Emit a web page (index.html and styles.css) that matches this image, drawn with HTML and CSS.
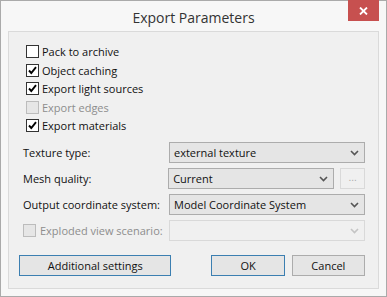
FILE: index.html
```html
<!DOCTYPE html>
<html lang="en">
<head>
    <meta charset="UTF-8">
    <title>Export Parameters</title>
    <link rel="stylesheet" href="styles.css">
</head>
<body>
    <div class="window">
        <div class="titlebar">
            <span class="title">Export Parameters</span>
            <button class="close"><svg width="9" height="8" viewBox="0 0 9 8"><path d="M1 0.5 L8 7.5 M8 0.5 L1 7.5" stroke="white" stroke-width="1.8"/></svg></button>
        </div>
        <div class="content">
            <div class="checks">
                <label class="check"><span class="box"></span>Pack to archive</label>
                <label class="check"><span class="box"><svg width="11" height="11" viewBox="0 0 11 11"><path d="M2 5.5 L4.3 8 L9 2.2" fill="none" stroke="#000" stroke-width="1.9"/></svg></span>Object caching</label>
                <label class="check"><span class="box"><svg width="11" height="11" viewBox="0 0 11 11"><path d="M2 5.5 L4.3 8 L9 2.2" fill="none" stroke="#000" stroke-width="1.9"/></svg></span>Export light sources</label>
                <label class="check disabled"><span class="box"></span>Export edges</label>
                <label class="check"><span class="box"><svg width="11" height="11" viewBox="0 0 11 11"><path d="M2 5.5 L4.3 8 L9 2.2" fill="none" stroke="#000" stroke-width="1.9"/></svg></span>Export materials</label>
            </div>
            <div class="form">
                <div class="row">
                    <span class="label">Texture type:</span>
                    <div class="select">external texture<svg class="arrow" width="9" height="6" viewBox="0 0 9 6"><path d="M1 1 L4.5 4.5 L8 1" fill="none" stroke="#555" stroke-width="1.6"/></svg></div>
                </div>
                <div class="row">
                    <span class="label">Mesh quality:</span>
                    <div class="select short">Current<svg class="arrow" width="9" height="6" viewBox="0 0 9 6"><path d="M1 1 L4.5 4.5 L8 1" fill="none" stroke="#555" stroke-width="1.6"/></svg></div>
                    <button class="dots">...</button>
                </div>
                <div class="row">
                    <span class="label">Output coordinate system:</span>
                    <div class="select">Model Coordinate System<svg class="arrow" width="9" height="6" viewBox="0 0 9 6"><path d="M1 1 L4.5 4.5 L8 1" fill="none" stroke="#555" stroke-width="1.6"/></svg></div>
                </div>
                <div class="row">
                    <label class="check disabled exploded"><span class="box"></span>Exploded view scenario:</label>
                    <div class="select disabled"><svg class="arrow" width="9" height="6" viewBox="0 0 9 6"><path d="M1 1 L4.5 4.5 L8 1" fill="none" stroke="#c4c4c4" stroke-width="1.6"/></svg></div>
                </div>
            </div>
            <div class="buttons">
                <button class="btn wide">Additional settings</button>
                <button class="btn ok">OK</button>
                <button class="btn cancel">Cancel</button>
            </div>
        </div>
    </div>
</body>
</html>
```

FILE: styles.css
```css
body {
    margin: 0;
    padding: 0;
    font-family: 'Open Sans', 'Noto Sans', sans-serif;
    font-size: 11px;
    color: #111;
}

.window {
    width: 387px;
    height: 297px;
    box-sizing: border-box;
    border: 1px solid #aaa;
    background-color: #f7f7f7;
    padding: 0 7px 7px 7px;
    display: flex;
    flex-direction: column;
}

.titlebar {
    height: 30px;
    display: flex;
    justify-content: center;
    align-items: center;
    position: relative;
}

.title {
    font-size: 14px;
    color: #333;
    margin-top: 2px;
}

.close {
    position: absolute;
    top: -1px;
    right: 0;
    width: 31px;
    height: 21px;
    border: none;
    background-color: #c7504f;
    padding: 0;
    display: flex;
    align-items: center;
    justify-content: center;
}

.content {
    flex: 1;
    background-color: #f0f0f0;
    border: 1px solid #dadada;
    padding: 13px 13px 0 14px;
    display: flex;
    flex-direction: column;
}

.checks {
    display: flex;
    flex-direction: column;
    gap: 5.5px;
    padding-left: 3px;
}

.check {
    display: flex;
    align-items: center;
    height: 13px;
    line-height: 13px;
}

.box {
    width: 11px;
    height: 11px;
    border: 1px solid #333;
    background-color: white;
    margin-right: 3px;
    display: flex;
}

.check.disabled {
    color: #8d8d8d;
}

.check.disabled .box {
    border-color: #bcbcbc;
    background-color: #e6e6e6;
}

.form {
    margin-top: 10px;
    display: flex;
    flex-direction: column;
    gap: 5px;
}

.row {
    display: flex;
    align-items: center;
    height: 21px;
}

.label {
    width: 146px;
}

.exploded {
    width: 146px;
}

.exploded .box {
    margin-right: 4px;
}

.select {
    flex: 1;
    height: 21px;
    box-sizing: border-box;
    border: 1px solid #acacac;
    background-color: #e5e5e5;
    display: flex;
    align-items: center;
    padding: 0 5px 0 4px;
}

.select.short {
    flex: none;
    width: 166px;
}

.select.disabled {
    border-color: #d9d9d9;
    background-color: #f0f0f0;
}

.arrow {
    margin-left: auto;
}

.dots {
    width: 25px;
    height: 21px;
    margin-left: 6px;
    border: 1px solid #d9d9d9;
    background-color: #f0f0f0;
    color: #aaa;
    font-size: 10px;
    padding: 0 0 3px 0;
}

.buttons {
    display: flex;
    margin-top: 14px;
}

.btn {
    height: 21px;
    border: 1px solid #acacac;
    background-color: #e5e5e5;
    font-family: 'Open Sans', 'Noto Sans', sans-serif;
    font-size: 11px;
    color: #111;
    padding: 0;
}

.btn.wide {
    width: 154px;
    margin-left: -4px;
    border-color: #3c7fb1;
}

.btn.ok {
    width: 74px;
    margin-left: 40px;
    border-color: #3c7fb1;
}

.btn.cancel {
    width: 74px;
    margin-left: 7px;
}
```
